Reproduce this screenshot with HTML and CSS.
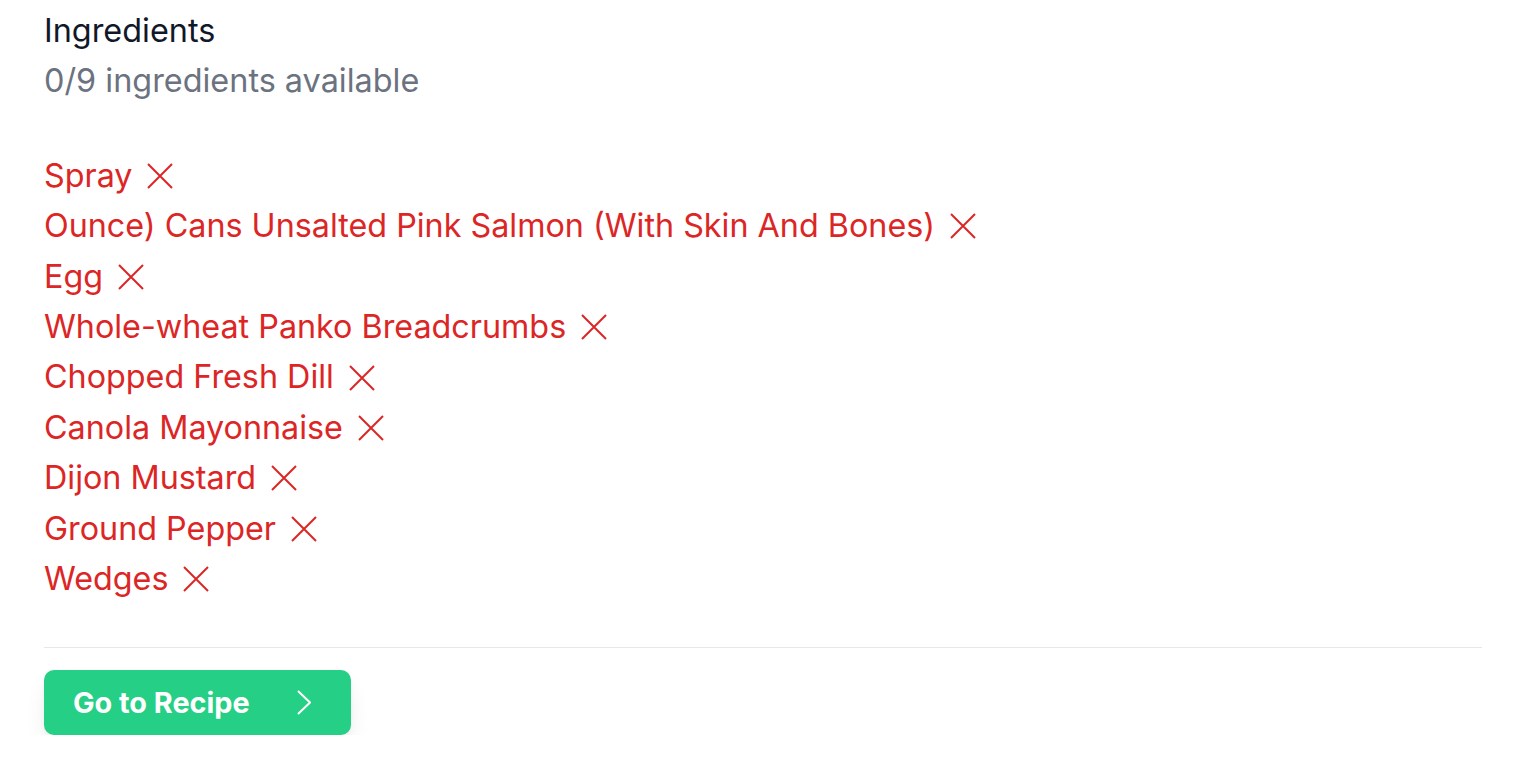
FILE: index.html
```html
<!DOCTYPE html>
<html>
<head>
<meta charset="utf-8">
<link rel="stylesheet" href="styles.css">
</head>
<body>
<div class="page">
  <h2 class="title">Ingredients</h2>
  <p class="subtitle">0/9 ingredients available</p>
  <ul class="list">
    <li class="item"><span>Spray</span><svg class="x" viewBox="0 0 26 26"><path d="M1 1L25 25M25 1L1 25"/></svg></li>
    <li class="item"><span>Ounce) Cans Unsalted Pink Salmon (With Skin And Bones)</span><svg class="x" viewBox="0 0 26 26"><path d="M1 1L25 25M25 1L1 25"/></svg></li>
    <li class="item"><span>Egg</span><svg class="x" viewBox="0 0 26 26"><path d="M1 1L25 25M25 1L1 25"/></svg></li>
    <li class="item"><span>Whole-wheat Panko Breadcrumbs</span><svg class="x" viewBox="0 0 26 26"><path d="M1 1L25 25M25 1L1 25"/></svg></li>
    <li class="item"><span>Chopped Fresh Dill</span><svg class="x" viewBox="0 0 26 26"><path d="M1 1L25 25M25 1L1 25"/></svg></li>
    <li class="item"><span>Canola Mayonnaise</span><svg class="x" viewBox="0 0 26 26"><path d="M1 1L25 25M25 1L1 25"/></svg></li>
    <li class="item"><span>Dijon Mustard</span><svg class="x" viewBox="0 0 26 26"><path d="M1 1L25 25M25 1L1 25"/></svg></li>
    <li class="item"><span>Ground Pepper</span><svg class="x" viewBox="0 0 26 26"><path d="M1 1L25 25M25 1L1 25"/></svg></li>
    <li class="item"><span>Wedges</span><svg class="x" viewBox="0 0 26 26"><path d="M1 1L25 25M25 1L1 25"/></svg></li>
  </ul>
  <div class="divider"></div>
  <button class="btn">Go to Recipe<svg class="chev" viewBox="0 0 14 25"><path d="M1 1L13 12.5L1 24"/></svg></button>
</div>
</body>
</html>
```
FILE: styles.css
```css
html, body { margin: 0; padding: 0; background: #fff; }
body { font-family: Inter, "Noto Sans", sans-serif; }
.page { padding: 6px 32px 0 44px; }
.title { margin: 0; font-size: 32.4px; font-weight: 400; color: #111827; line-height: 50.4px; }
.subtitle { margin: 0; font-size: 32.4px; color: #6b7280; line-height: 50.4px; }
.list { list-style: none; margin: 44px 0 0; padding: 0; }
.item { display: flex; align-items: center; gap: 15px; color: #dc2626; font-size: 32.3px; line-height: 50.4px; }
.x { width: 26px; height: 26px; fill: none; stroke: #dc2626; stroke-width: 2; }
.divider { margin-top: 43px; height: 1px; background: #e5e7eb; }
.btn { margin-top: 22px; display: flex; align-items: center; justify-content: space-between; width: 307px; height: 65px; padding: 0 40px 0 29px; border: none; border-radius: 10px; background: #26cf86; color: #fff; font-family: Inter, sans-serif; font-weight: 700; font-size: 28.8px; box-shadow: 0 12px 24px -6px rgba(0,0,0,0.12), 0 4px 8px -4px rgba(0,0,0,0.08); }
.chev { width: 14px; height: 25px; fill: none; stroke: #fff; stroke-width: 2; }
```
